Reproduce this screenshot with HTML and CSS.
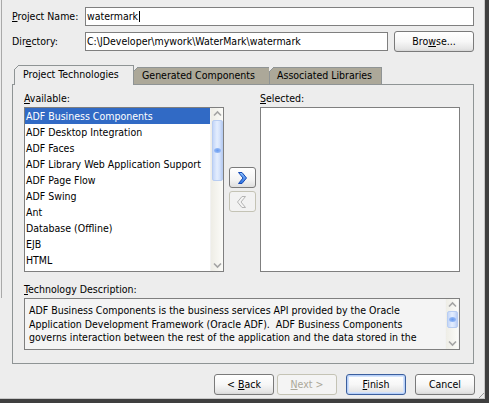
FILE: index.html
```html
<!DOCTYPE html>
<html>
<head>
<meta charset="utf-8">
<link rel="stylesheet" href="styles.css">
</head>
<body>
<div class="window">
  <div class="form">
    <div class="row r1">
      <label class="lbl"><u>P</u>roject Name:</label>
      <div class="field name">watermark<span class="caret"></span></div>
    </div>
    <div class="row r2">
      <label class="lbl">Dir<u>e</u>ctory:</label>
      <div class="field dir">C:\JDeveloper\mywork\WaterMark\watermark</div>
      <button class="btn browse">Bro<u>w</u>se...</button>
    </div>
  </div>

  <div class="tabs">
    <div class="tab active">Project Technologies</div>
    <div class="tab gen">Generated Components</div>
    <div class="tab assoc">Associated Libraries</div>
  </div>

  <div class="panel">
    <div class="shuttle">
      <div class="col">
        <div class="cap"><u>A</u>vailable:</div>
        <div class="listbox">
          <div class="items">
            <div class="item sel">ADF Business Components</div>
            <div class="item">ADF Desktop Integration</div>
            <div class="item">ADF Faces</div>
            <div class="item">ADF Library Web Application Support</div>
            <div class="item">ADF Page Flow</div>
            <div class="item">ADF Swing</div>
            <div class="item">Ant</div>
            <div class="item">Database (Offline)</div>
            <div class="item">EJB</div>
            <div class="item">HTML</div>
          </div>
          <div class="vscroll big">
            <svg class="arr" width="11" height="12" viewBox="0 0 11 12"><polyline points="2,7.5 5.5,4 9,7.5" fill="none" stroke="#a4a4a4" stroke-width="1.6"/></svg>
            <div class="thumb"><span class="grip"></span></div>
            <div class="track"></div>
            <svg class="arr" width="11" height="12" viewBox="0 0 11 12"><polyline points="2,4.5 5.5,8 9,4.5" fill="none" stroke="#a4a4a4" stroke-width="1.6"/></svg>
          </div>
        </div>
      </div>
      <div class="mid">
        <button class="abtn">
          <svg width="12" height="14" viewBox="0 0 12 14"><defs><linearGradient id="gb" x1="0" y1="0" x2="0" y2="1"><stop offset="0" stop-color="#8cc4ff"/><stop offset="1" stop-color="#2a6fe0"/></linearGradient></defs><path d="M2.5 1.5 L6 1.5 L10.5 7 L6 12.5 L2.5 12.5 L7 7 Z" fill="url(#gb)" stroke="#1448b4" stroke-width="1"/></svg>
        </button>
        <button class="abtn dis">
          <svg width="12" height="14" viewBox="0 0 12 14"><path d="M9.5 1.5 L6 1.5 L1.5 7 L6 12.5 L9.5 12.5 L5 7 Z" fill="#f4f4f4" stroke="#b4b4b4" stroke-width="1"/></svg>
        </button>
      </div>
      <div class="col">
        <div class="cap"><u>S</u>elected:</div>
        <div class="listbox"></div>
      </div>
    </div>

    <div class="cap dcap"><u>T</u>echnology Description:</div>
    <div class="desc">
      <div class="dtext"><span class="ln">ADF Business Components is the business services API provided by the Oracle</span><span class="ln">Application Development Framework (Oracle ADF).  ADF Business Components</span><span class="ln">governs interaction between the rest of the application and the data stored in the</span></div>
      <div class="vscroll small">
        <svg class="arr" width="11" height="12" viewBox="0 0 11 12"><polyline points="2,7.5 5.5,4 9,7.5" fill="none" stroke="#a4a4a4" stroke-width="1.6"/></svg>
        <div class="thumb"><span class="grip"></span></div>
        <div class="track"></div>
        <svg class="arr" width="11" height="12" viewBox="0 0 11 12"><polyline points="2,4.5 5.5,8 9,4.5" fill="none" stroke="#a4a4a4" stroke-width="1.6"/></svg>
      </div>
    </div>
  </div>

  <div class="footer">
    <button class="btn fb">&lt; <u>B</u>ack</button>
    <button class="btn fb disabled"><u>N</u>ext &gt;</button>
    <button class="btn fb def gap"><u>F</u>inish</button>
    <button class="btn fb gap">Cancel</button>
  </div>
  <div class="grip-corner"></div>
</div>
</body>
</html>
```

FILE: styles.css
```css
html, body {
  margin: 0;
  padding: 0;
  background: #ededed;
}
body {
  font-family: "DejaVu Sans Condensed", "DejaVu Sans", sans-serif;
  font-stretch: condensed;
  font-size: 10.5px;
  color: #000;
}
u { text-decoration: underline; text-underline-offset: 1px; }

.window {
  width: 489px;
  height: 403px;
  box-sizing: border-box;
  position: relative;
  overflow: hidden;
  background: linear-gradient(#a9a9a9, #a9a9a9) 1px 0 / 1px 298px no-repeat, #ededed;
  border-right: 4px solid #3f3f3f;
  border-bottom: 4px solid #3f3f3f;
  box-shadow: inset -1px -1px 0 #c8c8c8;
}

/* top form */
.form { padding: 7px 0 0 12px; }
.row { display: flex; align-items: center; }
.r1 { height: 19px; }
.r2 { height: 21px; margin-top: 5px; }
.lbl { width: 73px; flex: none; line-height: 13px; }
.field {
  box-sizing: border-box;
  height: 19px;
  border: 1px solid #7f7f7f;
  background: #fff;
  padding-left: 1px;
  line-height: 17px;
  white-space: nowrap;
  overflow: hidden;
}
.name { width: 389px; }
.dir { width: 303px; }
.caret {
  display: inline-block;
  width: 1px;
  height: 11px;
  background: #000;
  vertical-align: -2px;
  margin-left: 1px;
}

.btn {
  font: inherit;
  color: #000;
  box-sizing: border-box;
  border: 1px solid #7a7a7a;
  border-radius: 3px;
  background: linear-gradient(#ffffff 0%, #f7f7f7 50%, #e4e4e4 90%, #d6d6d6 100%);
  padding: 0;
  margin: 0;
  line-height: 17px;
}
.browse { width: 80px; height: 21px; margin-left: 6px; }

/* tabs */
.tabs {
  display: flex;
  align-items: flex-end;
  margin-top: 13px;
  padding-left: 14px;
  height: 19px;
}
.tab {
  position: relative;
  box-sizing: border-box;
  height: 17px;
  border: 1px solid #8f9495;
  border-bottom: none;
  background: #aca899;
  line-height: 15px;
  white-space: nowrap;
}
.tab::before {
  content: "";
  position: absolute;
  top: -1px;
  left: -1px;
  width: 5px;
  height: 5px;
  background: linear-gradient(to bottom right, #ededed 0, #ededed calc(50% - 0.6px), #8f9495 calc(50% - 0.6px), #8f9495 calc(50% + 0.6px), transparent calc(50% + 0.6px));
}
.tab.active {
  z-index: 1;
  height: 20px;
  margin-bottom: -1px;
  width: 120px;
  padding-left: 8px;
  background: #ededed;
  line-height: 17px;
}
.gen { width: 137px; padding-left: 8px; margin-left: -1px; }
.assoc { width: 113px; padding-left: 7px; margin-left: -1px; }

/* panel */
.panel {
  box-sizing: border-box;
  margin-left: 12px;
  width: 462px;
  height: 280px;
  border: 1px solid #8f9495;
  padding: 7px 0 0 11px;
}
.shuttle {
  display: grid;
  grid-template-columns: 200px 36px 200px;
}
.cap { line-height: 13px; height: 13px; margin-bottom: 2px; }
.listbox {
  box-sizing: border-box;
  width: 200px;
  height: 165px;
  border: 1px solid #7f7f7f;
  background: #fff;
  display: flex;
  overflow: hidden;
}
.items { flex: 1; min-width: 0; }
.item {
  height: 16px;
  line-height: 16px;
  padding-left: 1px;
  white-space: nowrap;
  overflow: hidden;
}
.item.sel { background: #316ac5; color: #fff; }

.vscroll {
  flex: none;
  width: 12px;
  display: flex;
  flex-direction: column;
  align-items: center;
  background: linear-gradient(to right, #eeede6, #fbfbf8);
  border-left: 1px solid #f2f2f2;
}
.arr { flex: none; display: block; }
.thumb {
  box-sizing: border-box;
  width: 11px;
  flex: none;
  border: 1px solid #b8cdf2;
  border-radius: 2px;
  background: linear-gradient(to right, #c4d6f8, #e4eefe 45%, #d4e2fb 75%, #b9cdf4);
  display: flex;
  align-items: center;
  justify-content: center;
}
.big .thumb { height: 61px; align-items: flex-start; padding-top: 27px; }
.small .thumb { height: 17px; }
.grip {
  width: 7px;
  height: 5px;
  border-radius: 50%;
  background: radial-gradient(#6a9cf0, #a8c6f8);
}
.track { flex: 1; }

.mid {
  display: flex;
  flex-direction: column;
  align-items: center;
  justify-content: center;
  gap: 3px;
  padding-top: 15px;
}
.abtn {
  box-sizing: border-box;
  width: 27px;
  height: 21px;
  border: 1px solid #7a7a7a;
  border-radius: 3px;
  background: linear-gradient(#ffffff, #f4f4f4 60%, #dedede);
  padding: 0;
  display: flex;
  align-items: center;
  justify-content: center;
}
.abtn.dis { border-color: #c4c3b5; background: #f2f2f2; }

.dcap { margin-top: 11px; }
.desc {
  box-sizing: border-box;
  width: 436px;
  height: 52px;
  border: 1px solid #7f7f7f;
  background: #f4f4f4;
  display: flex;
  overflow: hidden;
}
.dtext {
  flex: 1;
  padding: 5px 0 0 4px;
  line-height: 13.5px;
  overflow: hidden;
}
.ln { display: block; white-space: pre; }
.desc .vscroll { margin-right: 1px; }

/* footer */
.footer {
  display: flex;
  justify-content: flex-end;
  margin-top: 10px;
  padding-right: 10px;
}
.fb { width: 60px; height: 21px; margin-left: 3px; }
.fb.gap { margin-left: 9px; }
.fb.disabled { color: #aca899; border-color: #c4c3b5; background: #f4f4f4; }
.fb.def {
  border-color: #3b5f9e;
  box-shadow: inset 0 0 0 1px #b8d0f8, inset 0 0 0 2px #d2e2fb;
}

.grip-corner {
  position: absolute;
  right: 1px;
  bottom: 1px;
  width: 10px;
  height: 10px;
  background: repeating-linear-gradient(135deg, transparent 0 2px, #9a9a9a 2px 3px, transparent 3px 4px);
  clip-path: polygon(100% 0, 100% 100%, 0 100%);
}
```
